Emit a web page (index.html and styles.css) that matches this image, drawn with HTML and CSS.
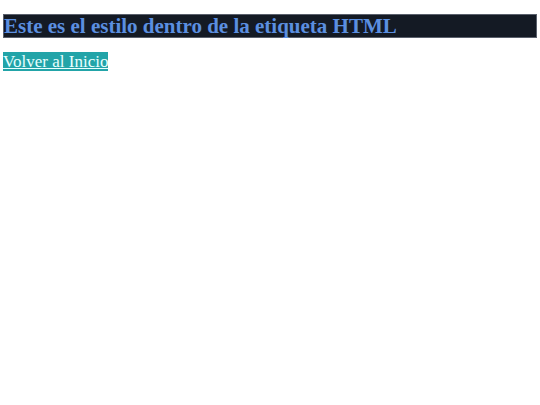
FILE: index.html
```html
<!DOCTYPE html>
<html>
<head>
<meta charset="utf-8">
<link rel="stylesheet" href="styles.css">
</head>
<body>
<h1 class="titulo">Este es el estilo dentro de la etiqueta HTML</h1>
<a class="volver" href="#">Volver al Inicio</a>
</body>
</html>
```
FILE: styles.css
```css
html, body { background: #ffffff; }
body {
  margin: 14px 3px 3px 3px;
  font-family: "Liberation Serif", "Times New Roman", serif;
}
.titulo {
  margin: 0 0 14px 0;
  background: #141a24;
  border: 1px solid #5a606c;
  color: #5b8fe0;
  font-size: 21px;
  font-weight: bold;
  line-height: 22px;
}
.volver {
  background: #22a4a8;
  color: #e8ffff;
  font-size: 17px;
  line-height: 19px;
  text-decoration: underline;
}
```
